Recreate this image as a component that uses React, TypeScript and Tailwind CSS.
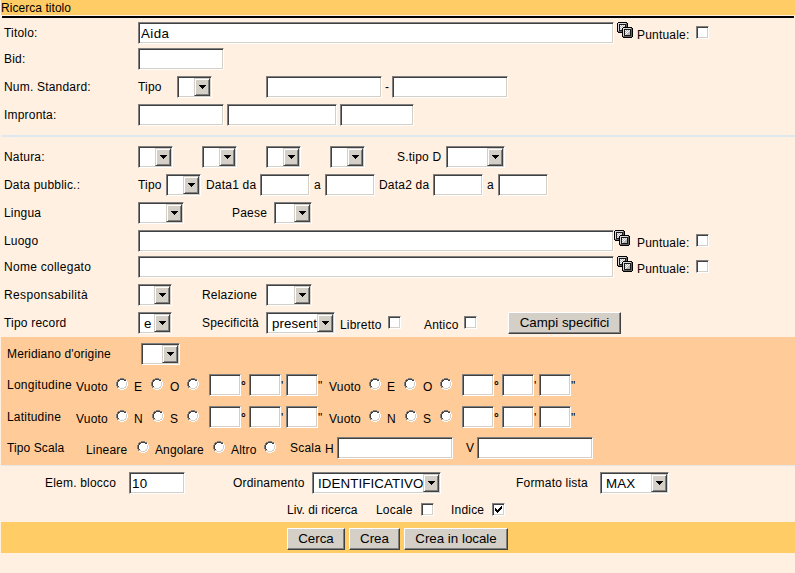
import React from "react";

type Box = { c?: string };

const sunken =
  "shrink-0 box-border border border-t-[#808080] border-l-[#808080] border-r-white border-b-white bg-white shadow-[inset_1px_1px_0_#404040,inset_-1px_-1px_0_#d4d0c8]";

/* Form row: children flow from left to right; each carries its own gap. */
function Row({ c = "", children }: { c?: string; children: React.ReactNode }) {
  return <div className={`flex items-start ${c}`}>{children}</div>;
}

/* Caption with a fixed column width. */
function T({ c = "", children }: { c?: string; children: React.ReactNode }) {
  return (
    <span className={`mt-1 block h-3.5 shrink-0 whitespace-nowrap leading-[14px] ${c}`}>{children}</span>
  );
}

function Field({ c = "", value = "" }: Box & { value?: string }) {
  return (
    <input
      defaultValue={value}
      className={`h-[22px] px-[2px] pt-px text-[13.33px] tracking-[0.4px] outline-none ${sunken} ${c}`}
    />
  );
}

function Select({ c = "", value = "" }: Box & { value?: string }) {
  return (
    <div className={`flex h-[22px] overflow-hidden p-px ${sunken} ${c}`}>
      <span className="min-w-0 flex-1 whitespace-nowrap pl-1 pt-[2px] text-[13.33px] leading-4 tracking-[0.1px]">
        {value}
      </span>
      <span className="flex h-[18px] w-4 shrink-0 items-center justify-center border border-t-[#d4d0c8] border-l-[#d4d0c8] border-r-[#404040] border-b-[#404040] bg-[#d4d0c8] shadow-[inset_1px_1px_0_#fff,inset_-1px_-1px_0_#808080]">
        <svg width="7" height="4" viewBox="0 0 7 4" shapeRendering="crispEdges">
          <path d="M0 0h7v1H6v1H5v1H4v1H3V3H2V2H1V1H0z" fill="#000" />
        </svg>
      </span>
    </div>
  );
}

function Check({ c = "", on = false }: Box & { on?: boolean }) {
  return (
    <span className={`block size-[13px] ${sunken} ${c}`}>
      {on && (
        <svg width="11" height="11" viewBox="0 0 11 11" shapeRendering="crispEdges">
          <path d="M2 4h1v1h1v1h1V5h1V4h1V3h1V2h1v3H8v1H7v1H6v1H5v1H4V8H3V7H2z" fill="#000" />
        </svg>
      )}
    </span>
  );
}

function Radio({ c = "" }: Box) {
  return (
    <svg className={`mt-1 block shrink-0 ${c}`} width="12" height="12" viewBox="0 0 12 12" shapeRendering="crispEdges">
      <path d="M4 1h4v1h2v2h1v4h-1v2H8v1H4v-1H2V8H1V4h1V2h2z" fill="#fff" />
      <path d="M4 0h4v1H4zM2 1h2v1H2zM8 1h2v1H8zM1 2h1v2H1zM0 4h1v4H0zM1 8h1v2H1z" fill="#808080" />
      <path d="M4 1h4v1H4zM2 2h2v1H2zM8 2h2v1H8zM2 3h1v1H2zM1 4h1v4H1zM2 8h1v1H2z" fill="#404040" />
      <path d="M10 4h1v4h-1zM9 8h1v1H9zM8 9h2v1H8zM4 10h4v1H4zM2 9h2v1H2z" fill="#d4d0c8" />
      <path d="M10 2h1v2h-1zM11 4h1v4h-1zM10 8h1v2h-1zM8 10h2v1H8zM4 11h4v1H4zM2 10h2v1H2z" fill="#fff" />
    </svg>
  );
}

function Btn({ c = "", children }: { c?: string; children: React.ReactNode }) {
  return (
    <button
      className={`h-[22px] shrink-0 whitespace-nowrap border border-t-white border-l-white border-r-[#404040] border-b-[#404040] bg-[#d4d0c8] text-[13.33px] leading-5 tracking-normal shadow-[inset_-1px_-1px_0_#808080] ${c}`}
    >
      {children}
    </button>
  );
}

function Tile({ x, y }: { x: number; y: number }) {
  return (
    <g transform={`translate(${x} ${y})`}>
      <path d="M1 0h9v1h1v9h-1v1H1v-1H0V1h1z" fill="#000" />
      <path d="M1 1h9v9H1z" fill="#606060" />
      <path d="M1 1h8v1H2v7H1z" fill="#d8d8d8" />
      <path d="M2 2h7v7H2z" fill="#181818" />
      <path d="M3 3h5v5H3z" fill="#b8b8b8" />
      <path d="M3 3h1v1H3zM5 3h1v1H5zM7 3h1v1H7zM4 4h1v1H4zM6 4h1v1H6zM3 5h1v1H3zM5 5h1v1H5zM4 6h1v1H4zM3 7h1v1H3z" fill="#f4f4f4" />
    </g>
  );
}

function Copies({ c = "" }: Box) {
  return (
    <svg className={`block shrink-0 ${c}`} width="16" height="16" viewBox="0 0 16 16" shapeRendering="crispEdges">
      <Tile x={0} y={0} />
      <Tile x={5} y={5} />
    </svg>
  );
}

function Coordinates({ a, b, second }: { a: string; b: string; second: string }) {
  return (
    <>
      <T c="mt-1.5 w-10">Vuoto</T>
      <Radio />
      <T c="ml-1.5 mt-1.5 w-[17px]">{a}</T>
      <Radio c={second} />
      <T c="mt-1.5 ml-[7px] w-[17px]">{b}</T>
      <Radio />
      <Field c="ml-[10px] w-8" />
      <T c="mt-[5px] w-2 font-bold">°</T>
      <Field c="w-8" />
      <T c="mt-[5px] w-[5px]">'</T>
      <Field c="w-8" />
      <T c="mt-[5px] w-[11px]">"</T>
    </>
  );
}

export default function App() {
  return (
    <div className="h-[573px] w-[795px] overflow-hidden bg-[#fff0e1] font-['Liberation_Sans',Arial,sans-serif] text-[12px] tracking-[0.2px] text-black">
      <header className="ml-px h-[15px] bg-[#ffcc66] leading-[17px] tracking-[0.05px]">Ricerca titolo</header>
      <div className="ml-0.5 mr-px mt-px h-0.5 bg-black" />

      <section className="pl-1 pt-1">
        <Row c="h-[26px]">
          <T c="w-[134px]">Titolo:</T>
          <Field c="w-[476px]" value="Aida" />
          <Copies c="ml-[3px]" />
          <T c="ml-1 mt-1.5 w-[59px]">Puntuale:</T>
          <Check c="mt-1" />
        </Row>
        <Row c="h-7">
          <T c="w-[134px]">Bid:</T>
          <Field c="w-[86px]" />
        </Row>
        <Row c="h-7">
          <T c="w-[134px]">Num. Standard:</T>
          <T c="w-[39px]">Tipo</T>
          <Select c="w-[35px]" />
          <Field c="ml-[54px] w-[116px]" />
          <T c="ml-[3px] w-[7px]">-</T>
          <Field c="w-[116px]" />
        </Row>
        <Row c="h-[31px]">
          <T c="w-[134px]">Impronta:</T>
          <Field c="w-[86px]" />
          <Field c="ml-[3px] w-[110px]" />
          <Field c="ml-[3px] w-[74px]" />
        </Row>
      </section>

      <div className="ml-px h-0.5 bg-[#dde8f0]" />

      <section className="h-[200px] pl-1 pt-[9px]">
        <Row c="h-7">
          <T c="w-[134px]">Natura:</T>
          <Select c="w-[35px]" />
          <Select c="ml-[29px] w-[35px]" />
          <Select c="ml-[29px] w-[35px]" />
          <Select c="ml-[29px] w-[35px]" />
          <T c="ml-8 w-[49px]">S.tipo D</T>
          <Select c="w-[59px]" />
        </Row>
        <Row c="h-7">
          <T c="w-[134px]">Data pubblic.:</T>
          <T c="w-7">Tipo</T>
          <Select c="w-[35px]" />
          <T c="ml-[5px] w-[54px]">Data1 da</T>
          <Field c="w-[50px]" />
          <T c="ml-1 w-[11px]">a</T>
          <Field c="w-[50px]" />
          <T c="ml-1 w-[54px]">Data2 da</T>
          <Field c="w-[50px]" />
          <T c="ml-1 w-[11px]">a</T>
          <Field c="w-[50px]" />
        </Row>
        <Row c="h-7">
          <T c="w-[134px]">Lingua</T>
          <Select c="w-[46px]" />
          <T c="ml-12 w-[42px]">Paese</T>
          <Select c="w-[38px]" />
        </Row>
        <Row c="h-[26px]">
          <T c="w-[134px]">Luogo</T>
          <Field c="w-[476px]" />
          <Copies />
          <T c="ml-[7px] mt-1.5 w-[59px]">Puntuale:</T>
          <Check c="mt-1" />
        </Row>
        <Row c="h-7">
          <T c="w-[134px] tracking-[0.27px]">Nome collegato</T>
          <Field c="w-[476px]" />
          <Copies c="ml-[3px]" />
          <T c="ml-1 mt-1.5 w-[59px]">Puntuale:</T>
          <Check c="mt-1" />
        </Row>
        <Row c="h-7">
          <T c="w-[134px] tracking-[0.38px]">Responsabilità</T>
          <Select c="w-[34px]" />
          <T c="ml-[30px] w-16">Relazione</T>
          <Select c="w-[46px]" />
        </Row>
        <Row>
          <T c="w-[134px]">Tipo record</T>
          <Select c="w-[34px]" value="e" />
          <T c="ml-[30px] w-16">Specificità</T>
          <Select c="w-[69px]" value="present" />
          <T c="ml-[5px] mt-1.5 w-12">Libretto</T>
          <Check c="mt-1" />
          <T c="ml-[23px] mt-1.5 w-10">Antico</T>
          <Check c="mt-1" />
          <Btn c="ml-[31px] w-[113px]">Campi specifici</Btn>
        </Row>
      </section>

      <section className="ml-px h-32 bg-[#ffcc99] pl-1.5 pt-1.5">
        <Row c="h-[31px]">
          <T c="w-[134px] tracking-[0.15px]">Meridiano d'origine</T>
          <Select c="w-[39px]" />
        </Row>
        <Row c="h-8">
          <T c="w-[69px] tracking-[0.25px]">Longitudine</T>
          <Coordinates a="E" b="O" second="" />
          <Coordinates a="E" b="O" second="" />
        </Row>
        <Row c="h-[31px]">
          <T c="w-[69px]">Latitudine</T>
          <Coordinates a="N" b="S" second="ml-px -mr-px" />
          <Coordinates a="N" b="S" second="ml-px -mr-px" />
        </Row>
        <Row>
          <T c="w-[79px] tracking-[0.1px]">Tipo Scala</T>
          <T c="mt-1.5 w-[51px]">Lineare</T>
          <Radio />
          <T c="ml-[6px] mt-1.5 w-[58px] tracking-[0.1px]">Angolare</T>
          <Radio />
          <T c="ml-1.5 mt-1.5 w-[33px]">Altro</T>
          <Radio />
          <T c="ml-[14px] w-[35px]">Scala</T>
          <T c="mt-[5px] w-3">H</T>
          <Field c="w-[116px]" />
          <T c="ml-[13px] w-[11px]">V</T>
          <Field c="w-[116px]" />
        </Row>
      </section>
      <div className="ml-px h-px bg-[#e6e6e6]" />

      <section className="h-14 pt-1.5">
        <Row c="h-[30px] pl-[45px]">
          <T c="w-[84px]">Elem. blocco</T>
          <Field c="w-14" value="10" />
          <T c="ml-12 w-[79px]">Ordinamento</T>
          <Select c="w-[129px]" value="IDENTIFICATIVO" />
          <T c="ml-[75px] w-[84px]">Formato lista</T>
          <Select c="w-[69px]" value="MAX" />
        </Row>
        <Row c="pl-[287px]">
          <T c="mt-px w-[89px] tracking-[0.05px]">Liv. di ricerca</T>
          <T c="mt-px w-[45px]">Locale</T>
          <Check c="mt-px" />
          <T c="ml-[17px] mt-px w-[41px]">Indice</T>
          <Check c="mt-px" on />
        </Row>
      </section>

      <footer className="ml-px flex h-[31px] gap-1 bg-[#ffcc66] pl-[286px] pt-1.5">
        <Btn c="w-[58px]">Cerca</Btn>
        <Btn c="w-[51px]">Crea</Btn>
        <Btn c="w-[104px]">Crea in locale</Btn>
      </footer>
    </div>
  );
}
